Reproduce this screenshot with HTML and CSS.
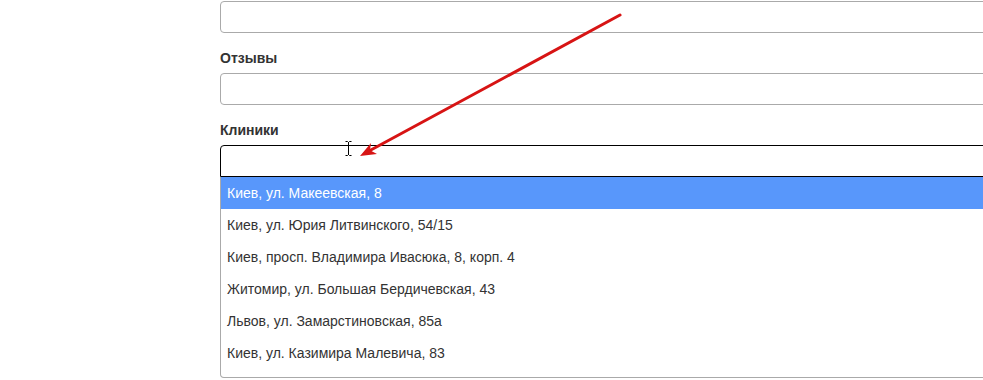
FILE: index.html
```html
<!DOCTYPE html>
<html lang="ru">
<head>
<meta charset="utf-8">
<title>Клиники</title>
<link rel="stylesheet" href="styles.css">
</head>
<body>
<div class="page">
  <form class="form">
    <div class="form-group">
      <div class="input"></div>
    </div>
    <div class="form-group">
      <label class="label">Отзывы</label>
      <div class="input"></div>
    </div>
    <div class="form-group">
      <label class="label">Клиники</label>
      <div class="select">
        <div class="input input-open"></div>
        <ul class="dropdown">
          <li class="option option-active">Киев, ул. Макеевская, 8</li>
          <li class="option">Киев, ул. Юрия Литвинского, 54/15</li>
          <li class="option">Киев, просп. Владимира Ивасюка, 8, корп. 4</li>
          <li class="option">Житомир, ул. Большая Бердичевская, 43</li>
          <li class="option">Львов, ул. Замарстиновская, 85а</li>
          <li class="option">Киев, ул. Казимира Малевича, 83</li>
        </ul>
      </div>
    </div>
  </form>
  <svg class="overlay" width="983" height="380" viewBox="0 0 983 380" aria-hidden="true">
    <line x1="620" y1="15" x2="369" y2="151" stroke="#d71414" stroke-width="3" stroke-linecap="round"/>
    <polygon points="360,156 371,143 370,150.3 377,154" fill="#d71414"/>
    <g stroke="#000" stroke-width="1" fill="none">
      <line x1="348.5" y1="142" x2="348.5" y2="155"/>
      <path d="M345.5 141.5 H347.5 L348.5 142.5 L349.5 141.5 H351.5"/>
      <path d="M345.5 155.5 H347.5 L348.5 154.5 L349.5 155.5 H351.5"/>
    </g>
  </svg>
</div>
</body>
</html>
```

FILE: styles.css
```css
html, body {
  margin: 0;
  padding: 0;
  background: #fff;
  overflow: hidden;
}

.page {
  position: relative;
  width: 983px;
  height: 380px;
  overflow: hidden;
  font-family: "Liberation Sans", Arial, sans-serif;
  font-size: 14px;
  line-height: 20px;
  color: #333;
}

.form {
  margin: 1px 0 0 220px;
  width: 820px;
}

.form-group {
  margin-bottom: 15px;
}

.label {
  display: block;
  font-weight: bold;
  margin-bottom: 5px;
}

.input {
  box-sizing: border-box;
  height: 32px;
  border: 1px solid #aaa;
  border-radius: 4px;
  background: #fff;
}

.input-open {
  border-color: #000;
  border-bottom-left-radius: 0;
  border-bottom-right-radius: 0;
}

.dropdown {
  box-sizing: border-box;
  margin: 0;
  padding: 0;
  list-style: none;
  height: 201px;
  overflow: hidden;
  border: 1px solid #aaa;
  border-top: none;
  border-radius: 0 0 4px 4px;
  background: #fff;
}

.option {
  padding: 6px;
  line-height: 20px;
  color: #333;
}

.option-active {
  background: #5897fb;
  color: #fff;
}

.overlay {
  position: absolute;
  left: 0;
  top: 0;
  pointer-events: none;
}
```
